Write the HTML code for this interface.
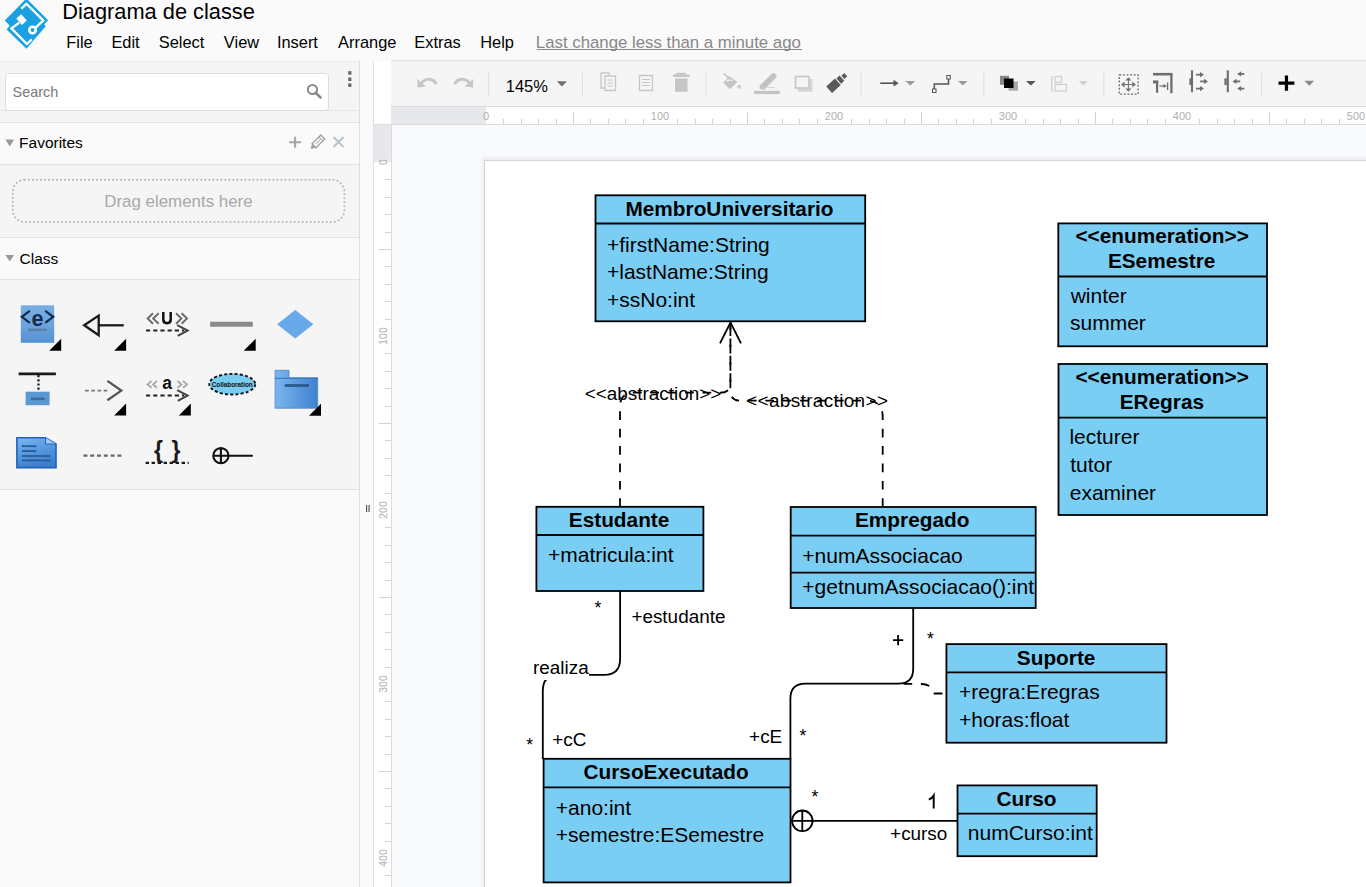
<!DOCTYPE html>
<html><head><meta charset="utf-8"><title>Diagrama de classe</title>
<style>
html,body{margin:0;padding:0;width:1366px;height:887px;overflow:hidden;background:#fafafa;}
svg{display:block;font-family:"Liberation Sans",sans-serif;}
</style></head><body>
<svg width="1366" height="887" viewBox="0 0 1366 887">
<rect x="0" y="0" width="1366" height="887" fill="#fafafa"/>
<rect x="0" y="61" width="360" height="826" fill="#f5f5f5"/>
<line x1="0" y1="61.5" x2="360" y2="61.5" stroke="#ececec" stroke-width="1"/>
<rect x="0" y="123" width="360" height="41" fill="#fafafa"/>
<rect x="0" y="238" width="360" height="41" fill="#fafafa"/>
<rect x="0" y="490" width="360" height="397" fill="#fafafa"/>
<line x1="0" y1="110.5" x2="360" y2="110.5" stroke="#e6e6e6" stroke-width="1"/>
<line x1="0" y1="122.5" x2="360" y2="122.5" stroke="#e2e2e2" stroke-width="1"/>
<line x1="0" y1="164.5" x2="360" y2="164.5" stroke="#e2e2e2" stroke-width="1"/>
<line x1="0" y1="237.5" x2="360" y2="237.5" stroke="#e2e2e2" stroke-width="1"/>
<line x1="0" y1="279.5" x2="360" y2="279.5" stroke="#e2e2e2" stroke-width="1"/>
<line x1="0" y1="489.5" x2="360" y2="489.5" stroke="#e2e2e2" stroke-width="1"/>
<line x1="359.5" y1="61" x2="359.5" y2="887" stroke="#e0e0e0" stroke-width="1"/>
<rect x="360" y="61" width="14" height="826" fill="#fafafa"/>
<line x1="373.5" y1="61" x2="373.5" y2="887" stroke="#e2e2e2" stroke-width="1"/>
<rect x="391" y="61" width="975" height="45" fill="#f5f5f5"/>
<line x1="391" y1="60.5" x2="1366" y2="60.5" stroke="#e0e0e0" stroke-width="1"/>
<rect x="374" y="61" width="17" height="45" fill="#ffffff"/>
<rect x="392" y="124" width="974" height="763" fill="#f8f9fa"/>
<rect x="374" y="106" width="992" height="18" fill="#ffffff"/>
<rect x="374" y="106" width="17.5" height="781" fill="#ffffff"/>
<rect x="391" y="106.5" width="95" height="17.5" fill="#e7e8eb"/>
<rect x="374" y="124" width="17.5" height="38" fill="#e7e8eb"/>
<line x1="391" y1="106.5" x2="1366" y2="106.5" stroke="#dcdcdc" stroke-width="1"/>
<line x1="374" y1="124.5" x2="1366" y2="124.5" stroke="#dcdcdc" stroke-width="1"/>
<line x1="391.5" y1="124" x2="391.5" y2="887" stroke="#dcdcdc" stroke-width="1"/>
<rect x="481.5" y="156.5" width="900" height="800" fill="#f3f4f6"/>
<rect x="483" y="158" width="900" height="800" fill="#eceef0"/>
<rect x="484.5" y="160.5" width="900" height="800" fill="#ffffff" stroke="#d6d6d6" stroke-width="1"/>
<g>
<polygon points="26.4,-1.5 48.2,20.3 44.2,24.3 45.8,26.2 26.4,48.8 6.6,29.4 9.6,25.6 4.8,20.6" fill="#1ba1e2"/>
<polyline points="21.3,8.6 26.4,3.8 43.2,20.5 34.6,28.6" fill="none" stroke="#fff" stroke-width="2.3"/>
<polygon points="16.3,18.6 21.2,14.2 26.8,20.4 21.9,25" fill="#fff"/>
<polyline points="19.2,22.8 11.4,28.4 26.8,44 31.8,39.4" fill="none" stroke="#fff" stroke-width="2.3"/>
<circle cx="32.5" cy="30" r="3.2" fill="none" stroke="#fff" stroke-width="2.6"/>
</g>
<text x="62.26" y="19.00" font-size="21.8" fill="#000">Diagrama de classe</text>
<text x="66.29" y="47.60" font-size="16.4" fill="#000">File</text>
<text x="111.39" y="47.60" font-size="16.4" fill="#000">Edit</text>
<text x="158.76" y="47.60" font-size="16.4" fill="#000">Select</text>
<text x="223.86" y="47.60" font-size="16.4" fill="#000">View</text>
<text x="276.92" y="47.60" font-size="16.4" fill="#000">Insert</text>
<text x="338.10" y="47.60" font-size="16.4" fill="#000">Arrange</text>
<text x="414.29" y="47.60" font-size="16.4" fill="#000">Extras</text>
<text x="480.19" y="47.60" font-size="16.4" fill="#000">Help</text>
<text x="535.86" y="47.60" font-size="16.8" fill="#888">Last change less than a minute ago</text>
<line x1="536.7" y1="49.5" x2="801.9" y2="49.5" stroke="#888" stroke-width="1"/>
<rect x="5.5" y="73.5" width="323" height="37" fill="#ffffff" rx="3" stroke="#dcdcdc" stroke-width="1"/>
<text x="12.55" y="96.80" font-size="14.4" fill="#777">Search</text>
<circle cx="312.5" cy="89.5" r="4.6" fill="none" stroke="#8a8a8a" stroke-width="2"/><line x1="315.6" y1="92.7" x2="320.5" y2="97.5" stroke="#8a8a8a" stroke-width="2.6" stroke-linecap="round"/>
<rect x="348.2" y="71.2" width="3.2" height="3.5" fill="#666"/>
<rect x="348.2" y="77.5" width="3.2" height="3.5" fill="#666"/>
<rect x="348.2" y="83.4" width="3.2" height="3.5" fill="#666"/>
<polygon points="5.4,139.6 14.1,139.6 9.75,146.4" fill="#999"/>
<text x="19.06" y="148.40" font-size="15.5" fill="#000">Favorites</text>
<path d="M289.3,142.3 H301 M295.1,136.7 V147.8" stroke="#a6a6a6" stroke-width="2.1"/>
<g transform="translate(317.2,142.6) rotate(-45)"><rect x="-4.5" y="-2.8" width="12.5" height="5.6" fill="#fafafa" stroke="#a4a4a4" stroke-width="1.3"/><path d="M-4.5,-2.8 L-9.2,0 L-4.5,2.8 Z" fill="#a0a0a0"/><path d="M5.2,-2.8 V2.8" stroke="#a4a4a4" stroke-width="1"/><path d="M-2,0 H4" stroke="#b0b0b0" stroke-width="1"/></g>
<path d="M333.5,137 L343.5,147 M343.5,137 L333.5,147" stroke="#b9c2d2" stroke-width="2.1"/>
<rect x="12.8" y="179.8" width="331.6" height="42.2" rx="12" fill="none" stroke="#b4b4b4" stroke-width="2" stroke-linecap="round" stroke-dasharray="0.01,4"/>
<text x="104.25" y="206.80" font-size="16.9" fill="#a8a8a8">Drag elements here</text>
<polygon points="5.4,255 14.1,255 9.75,261.6" fill="#999"/>
<text x="19.53" y="263.60" font-size="15.5" fill="#000">Class</text>
<defs>
<linearGradient id="gblue" x1="0" y1="0" x2="1" y2="1"><stop offset="0" stop-color="#7fb6e6"/><stop offset="1" stop-color="#3f86cf"/></linearGradient>
<linearGradient id="gblue2" x1="0" y1="0" x2="1" y2="0"><stop offset="0" stop-color="#6aa8e4"/><stop offset="1" stop-color="#2f74c4"/></linearGradient>
</defs>
<defs><linearGradient id="genum" x1="0" y1="0" x2="0" y2="1"><stop offset="0" stop-color="#78aee4"/><stop offset="0.55" stop-color="#6aa3dc"/><stop offset="1" stop-color="#5590d2"/></linearGradient></defs>
<rect x="20.8" y="305.3" width="33.4" height="37.5" fill="url(#genum)"/>
<text x="37.5" y="326" font-size="21.5" font-weight="bold" text-anchor="middle" fill="#132c4c">e</text>
<path d="M29.8,310.8 L21.8,316.8 L29.8,322.8 M45.2,310.8 L53.2,316.8 L45.2,322.8" fill="none" stroke="#132c4c" stroke-width="2.2"/>
<line x1="28" y1="329.9" x2="47" y2="329.9" stroke="#5a82ad" stroke-width="2.6"/>
<polygon points="61.2,338.8 61.2,350.8 49.2,350.8" fill="#000"/>
<path d="M84.2,325.3 L98.7,315.6 L98.7,335.2 Z" fill="#f5f5f5" stroke="#1a1a1a" stroke-width="2.3"/>
<line x1="98.7" y1="325.3" x2="123.8" y2="325.3" stroke="#1a1a1a" stroke-width="2.3"/>
<polygon points="126.1,338.8 126.1,350.8 114.1,350.8" fill="#000"/>
<path d="M153,313.2 L147.6,318.5 L153,323.8 M158.6,313.2 L153.2,318.5 L158.6,323.8 M176,313.2 L181.4,318.5 L176,323.8 M181.6,313.2 L187,318.5 L181.6,323.8" fill="none" stroke="#6a6a6a" stroke-width="1.9"/>
<path d="M163.3,312 V319.6 Q163.3,323.2 167,323.2 Q170.7,323.2 170.7,319.6 V312" fill="none" stroke="#111" stroke-width="2.5"/>
<path d="M146,330.5 H184" stroke="#222" stroke-width="2.2" stroke-dasharray="4.2,3"/><path d="M177.2,325.2 L187.6,330.5 L177.8,335.8" fill="none" stroke="#444" stroke-width="2"/>
<line x1="210.1" y1="324.2" x2="252.8" y2="324.2" stroke="#8a8a8a" stroke-width="5"/>
<polygon points="255.7,338.7 255.7,350.7 243.7,350.7" fill="#000"/>
<polygon points="295.2,310.1 313.4,324.35 295.2,338.6 277.1,324.35" fill="#68a9ea"/>
<line x1="18.6" y1="373.9" x2="55.9" y2="373.9" stroke="#1a1a1a" stroke-width="2.6"/>
<path d="M38.5,375 V391.5" stroke="#1a1a1a" stroke-width="2.2" stroke-dasharray="2.2,2"/>
<rect x="25.6" y="391.7" width="24" height="13.5" fill="#5b97d3"/>
<line x1="30.9" y1="398.9" x2="44.8" y2="398.9" stroke="#3a6a9e" stroke-width="2.6"/>
<path d="M85.1,390.6 H110" stroke="#777" stroke-width="1.9" stroke-dasharray="3.6,2.6"/><path d="M107.4,380.9 L121.3,390.6 L107.4,400.3" fill="none" stroke="#555" stroke-width="2.3"/>
<polygon points="126.1,403.6 126.1,415.6 114.1,415.6" fill="#000"/>
<path d="M151.5,381 L147.5,384.4 L151.5,387.8 M157,381 L153,384.4 L157,387.8 M177.5,381 L181.5,384.4 L177.5,387.8 M183,381 L187,384.4 L183,387.8" fill="none" stroke="#a8a8a8" stroke-width="1.8"/>
<text x="167" y="388.8" font-size="17.5" font-weight="bold" text-anchor="middle" fill="#111">a</text>
<path d="M146,395.5 H184" stroke="#222" stroke-width="2.2" stroke-dasharray="4.2,3"/><path d="M177.2,390.2 L187.6,395.5 L177.8,400.8" fill="none" stroke="#444" stroke-width="2"/>
<polygon points="190.8,403.6 190.8,415.6 178.8,415.6" fill="#000"/>
<ellipse cx="232.25" cy="384.2" rx="23" ry="10.3" fill="#7accf0" stroke="#111" stroke-width="1.9" stroke-dasharray="3,2.2"/>
<text x="232.25" y="386.6" font-size="6.6" font-weight="bold" text-anchor="middle" fill="#111" textLength="41" lengthAdjust="spacingAndGlyphs">Collaboration</text>
<defs><linearGradient id="gfold" x1="0" y1="0" x2="1" y2="0"><stop offset="0" stop-color="#7ab6ee"/><stop offset="1" stop-color="#3f80d0"/></linearGradient></defs>
<path d="M275.1,370.3 H289 V377.8 H317.7 V408.2 H275.1 Z" fill="url(#gfold)" stroke="#4a86c8" stroke-width="0.8"/>
<line x1="275.1" y1="378.3" x2="317.7" y2="378.3" stroke="#3f78bd" stroke-width="1.2"/>
<line x1="284.6" y1="385.5" x2="308.9" y2="385.5" stroke="#2b5a8c" stroke-width="2.8"/>
<polygon points="321,403.7 321,415.7 309,415.7" fill="#000"/>
<defs><linearGradient id="gnote" x1="0" y1="0" x2="0.4" y2="1"><stop offset="0" stop-color="#7ab8f0"/><stop offset="1" stop-color="#3a7fd0"/></linearGradient></defs>
<path d="M16.9,437.8 H45.5 L56,444 V467.6 H16.9 Z" fill="url(#gnote)" stroke="#1f62b8" stroke-width="1.6"/>
<path d="M45.5,437.8 V444 H56" fill="#9fcaf5" stroke="#1f62b8" stroke-width="1"/>
<line x1="21.8" y1="446.2" x2="36.4" y2="446.2" stroke="#2a5a9a" stroke-width="1.8"/>
<line x1="21.8" y1="451.1" x2="36.4" y2="451.1" stroke="#2a5a9a" stroke-width="1.8"/>
<line x1="21.8" y1="456" x2="50.3" y2="456" stroke="#2a5a9a" stroke-width="1.8"/>
<line x1="21.8" y1="460.4" x2="50.3" y2="460.4" stroke="#2a5a9a" stroke-width="1.8"/>
<path d="M83.4,455.7 H124" stroke="#666" stroke-width="2.2" stroke-dasharray="4,2.8"/>
<text x="158.5" y="457.5" font-size="23" font-weight="bold" text-anchor="middle" fill="#1a1a1a">{</text>
<text x="175.9" y="457.5" font-size="23" font-weight="bold" text-anchor="middle" fill="#1a1a1a">}</text>
<path d="M145.6,462.9 H188.7" stroke="#1a1a1a" stroke-width="2.2" stroke-dasharray="3.4,2.6"/>
<circle cx="220.9" cy="455.7" r="7.6" fill="none" stroke="#111" stroke-width="2.1"/><path d="M213.3,455.7 H252.8 M220.9,448.1 V463.3" stroke="#111" stroke-width="2.1"/>
<path d="M420,86 C423,78 432,77 436.5,84" fill="none" stroke="#c6c6c6" stroke-width="3"/><polygon points="417.5,79 426,86.5 417.5,87.5" fill="#c6c6c6"/>
<path d="M454.5,84 C459,77 468,78 471,86" fill="none" stroke="#c6c6c6" stroke-width="3"/><polygon points="473,79 464.5,86.5 473,87.5" fill="#c6c6c6"/>
<line x1="488.7" y1="72.5" x2="488.7" y2="96" stroke="#dedede" stroke-width="1"/>
<text x="505.76" y="91.60" font-size="16.5" fill="#000">145%</text>
<polygon points="556.8,81.2 567,81.2 561.9,86.4" fill="#707070"/>
<line x1="582.4" y1="72.5" x2="582.4" y2="96" stroke="#dedede" stroke-width="1"/>
<path d="M601,73 H609 V88 H601 Z" fill="none" stroke="#c6c6c6" stroke-width="1.3"/><path d="M605,76 H615.5 V90.5 H605 Z" fill="#f5f5f5" stroke="#c6c6c6" stroke-width="1.3"/><path d="M607.5,80 H613 M607.5,83 H613 M607.5,86 H613" stroke="#c6c6c6" stroke-width="1.2"/>
<path d="M639.5,75.5 H652.5 V90.5 H639.5 Z" fill="none" stroke="#c6c6c6" stroke-width="1.3"/><path d="M642,79.5 H650 M642,82.5 H650 M642,85.5 H650" stroke="#c6c6c6" stroke-width="1.2"/>
<rect x="673" y="74.5" width="16.5" height="2.5" fill="#c6c6c6"/><rect x="676" y="72.8" width="10" height="2" fill="#c6c6c6"/><rect x="675" y="78.5" width="12.5" height="13.3" fill="#c6c6c6"/>
<line x1="706" y1="72.5" x2="706" y2="96" stroke="#dedede" stroke-width="1"/>
<path d="M723.2,82.6 L729.2,76 L737.5,82 L729.8,89.2 Z" fill="#c4c4c4"/><path d="M725.5,81.6 L729.2,77.8 L733.5,80.8 Z" fill="#f5f5f5"/><path d="M723.7,73.2 L730.9,80.4" stroke="#c4c4c4" stroke-width="1.6"/><circle cx="739.2" cy="86.8" r="2.1" fill="#cfcfcf"/>
<path d="M759.6,89 L759.8,85.6 L771.6,73.8 Q773.3,72.2 775,73.8 L775.8,74.6 Q777.4,76.3 775.8,78 L764,89.8 Z" fill="#c2c2c2"/><path d="M767,87.6 H775" stroke="#d2d2d2" stroke-width="1"/>
<rect x="754" y="90.8" width="25.7" height="3.3" fill="#c4c4c4"/>
<rect x="798" y="79" width="14.5" height="12.8" fill="#d6d6d6"/><rect x="795.5" y="76.5" width="13.5" height="11.5" fill="#f5f5f5" stroke="#c6c6c6" stroke-width="1.6"/>
<g transform="translate(836,83.5) rotate(-42) scale(0.84)"><rect x="-11" y="-5.2" width="14" height="10.4" fill="#5a5a5a"/><rect x="4.4" y="-4.2" width="5" height="8.4" fill="#5a5a5a"/><rect x="11" y="-2.6" width="4.6" height="5.2" fill="#5a5a5a"/></g>
<line x1="861" y1="72.5" x2="861" y2="96" stroke="#dedede" stroke-width="1"/>
<path d="M880.2,83.2 H896" stroke="#555" stroke-width="1.6"/><polygon points="893.5,79.8 898.7,83.2 893.5,86.6" fill="#555"/>
<polygon points="905.3,81 915.3,81 910.3,85.5" fill="#9a9a9a"/>
<path d="M934.3,90.5 V84 H948.5 V77.5" fill="none" stroke="#555" stroke-width="1.5"/><rect x="932.5" y="89" width="3.5" height="3.5" fill="#f5f5f5" stroke="#555" stroke-width="1"/><rect x="946.8" y="75.5" width="3.5" height="3.5" fill="#f5f5f5" stroke="#555" stroke-width="1"/>
<polygon points="958,81 967.5,81 962.75,85.5" fill="#9a9a9a"/>
<line x1="983.9" y1="72.5" x2="983.9" y2="96" stroke="#dedede" stroke-width="1"/>
<rect x="1000" y="75.8" width="9" height="9" fill="#888"/><rect x="1008.5" y="81.5" width="9.5" height="9.2" fill="#aaa"/><rect x="1004" y="78.5" width="9.5" height="9.5" fill="#000"/>
<polygon points="1026,81 1035.7,81 1030.85,85.5" fill="#555"/>
<path d="M1051.8,76 V92" stroke="#cfcfcf" stroke-width="1.4"/><rect x="1055" y="76.5" width="6.5" height="6" fill="none" stroke="#cfcfcf" stroke-width="1.3"/><rect x="1055" y="84.5" width="11.5" height="6.5" fill="none" stroke="#cfcfcf" stroke-width="1.3"/>
<polygon points="1078.7,81 1087.9,81 1083.3,85.5" fill="#d0d0d0"/>
<line x1="1103.9" y1="72.5" x2="1103.9" y2="96" stroke="#dedede" stroke-width="1"/>
<rect x="1119.3" y="74.8" width="18.8" height="19.3" fill="none" stroke="#6e6e6e" stroke-width="1.3" stroke-dasharray="2,1.6"/>
<path d="M1128.4,80 V89 M1124,84.5 H1133" stroke="#6e6e6e" stroke-width="1"/>
<polygon points="1128.4,77.2 1125.4,80.6 1131.4,80.6" fill="#6e6e6e"/><polygon points="1128.4,91.8 1125.4,88.4 1131.4,88.4" fill="#6e6e6e"/><polygon points="1121.2,84.5 1124.6,81.5 1124.6,87.5" fill="#6e6e6e"/><polygon points="1135.8,84.5 1132.4,81.5 1132.4,87.5" fill="#6e6e6e"/>
<path d="M1153,74.2 H1172.5" stroke="#6e6e6e" stroke-width="2.6"/><path d="M1171.4,74.2 V93.2" stroke="#6e6e6e" stroke-width="2.3"/>
<path d="M1153,81.9 H1158.2" stroke="#6e6e6e" stroke-width="3"/><path d="M1157.1,81 V92.7" stroke="#6e6e6e" stroke-width="2.2"/>
<path d="M1159.5,86 H1164.5" stroke="#6e6e6e" stroke-width="1.2"/><polygon points="1167,86 1163.5,84 1163.5,88" fill="#6e6e6e"/><path d="M1167.6,82.4 V90.1" stroke="#6e6e6e" stroke-width="1.3"/>
<path d="M1192,70.3 V92.2" stroke="#6e6e6e" stroke-width="2.1"/><rect x="1189.4" y="78.3" width="2" height="6.7" fill="#6e6e6e"/>
<path d="M1196,74.7 H1201" stroke="#6e6e6e" stroke-width="1.8"/><polygon points="1204,74.7 1200,72.10000000000001 1200,77.3" fill="#6e6e6e"/>
<path d="M1200.2,81.4 H1205" stroke="#6e6e6e" stroke-width="1.8"/><polygon points="1208,81.4 1204,78.80000000000001 1204,84.0" fill="#6e6e6e"/>
<path d="M1196,88.6 H1201" stroke="#6e6e6e" stroke-width="1.8"/><polygon points="1204,88.6 1200,86.0 1200,91.19999999999999" fill="#6e6e6e"/>
<path d="M1227.8,70.3 V92.2" stroke="#6e6e6e" stroke-width="2.1"/><rect x="1224.4" y="78.3" width="2.4" height="6.7" fill="#6e6e6e"/>
<path d="M1240.2,73.9 H1244.3" stroke="#6e6e6e" stroke-width="1.8"/><polygon points="1237.2,73.9 1241.2,71.30000000000001 1241.2,76.5" fill="#6e6e6e"/>
<path d="M1235.5,81.4 H1240.2" stroke="#6e6e6e" stroke-width="1.8"/><polygon points="1232.5,81.4 1236.5,78.80000000000001 1236.5,84.0" fill="#6e6e6e"/>
<path d="M1240.2,88.6 H1244.3" stroke="#6e6e6e" stroke-width="1.8"/><polygon points="1237.2,88.6 1241.2,86.0 1241.2,91.19999999999999" fill="#6e6e6e"/>
<line x1="1261.6" y1="72.5" x2="1261.6" y2="96" stroke="#dedede" stroke-width="1"/>
<path d="M1278.5,83.1 H1294.4 M1286.45,75.5 V90.7" stroke="#000" stroke-width="3.2"/>
<polygon points="1304.3,80.8 1314.2,80.8 1309.25,85.8" fill="#8a8a8a"/>
<line x1="503.5" y1="119" x2="503.5" y2="124" stroke="#d2d2d2" stroke-width="1"/>
<line x1="521.5" y1="119" x2="521.5" y2="124" stroke="#d2d2d2" stroke-width="1"/>
<line x1="538.5" y1="119" x2="538.5" y2="124" stroke="#d2d2d2" stroke-width="1"/>
<line x1="556.5" y1="119" x2="556.5" y2="124" stroke="#d2d2d2" stroke-width="1"/>
<line x1="573.5" y1="111.5" x2="573.5" y2="124" stroke="#d2d2d2" stroke-width="1"/>
<line x1="590.5" y1="119" x2="590.5" y2="124" stroke="#d2d2d2" stroke-width="1"/>
<line x1="608.5" y1="119" x2="608.5" y2="124" stroke="#d2d2d2" stroke-width="1"/>
<line x1="625.5" y1="119" x2="625.5" y2="124" stroke="#d2d2d2" stroke-width="1"/>
<line x1="643.5" y1="119" x2="643.5" y2="124" stroke="#d2d2d2" stroke-width="1"/>
<line x1="677.5" y1="119" x2="677.5" y2="124" stroke="#d2d2d2" stroke-width="1"/>
<line x1="695.5" y1="119" x2="695.5" y2="124" stroke="#d2d2d2" stroke-width="1"/>
<line x1="712.5" y1="119" x2="712.5" y2="124" stroke="#d2d2d2" stroke-width="1"/>
<line x1="730.5" y1="119" x2="730.5" y2="124" stroke="#d2d2d2" stroke-width="1"/>
<line x1="747.5" y1="111.5" x2="747.5" y2="124" stroke="#d2d2d2" stroke-width="1"/>
<line x1="764.5" y1="119" x2="764.5" y2="124" stroke="#d2d2d2" stroke-width="1"/>
<line x1="782.5" y1="119" x2="782.5" y2="124" stroke="#d2d2d2" stroke-width="1"/>
<line x1="799.5" y1="119" x2="799.5" y2="124" stroke="#d2d2d2" stroke-width="1"/>
<line x1="817.5" y1="119" x2="817.5" y2="124" stroke="#d2d2d2" stroke-width="1"/>
<line x1="851.5" y1="119" x2="851.5" y2="124" stroke="#d2d2d2" stroke-width="1"/>
<line x1="869.5" y1="119" x2="869.5" y2="124" stroke="#d2d2d2" stroke-width="1"/>
<line x1="886.5" y1="119" x2="886.5" y2="124" stroke="#d2d2d2" stroke-width="1"/>
<line x1="904.5" y1="119" x2="904.5" y2="124" stroke="#d2d2d2" stroke-width="1"/>
<line x1="921.5" y1="111.5" x2="921.5" y2="124" stroke="#d2d2d2" stroke-width="1"/>
<line x1="938.5" y1="119" x2="938.5" y2="124" stroke="#d2d2d2" stroke-width="1"/>
<line x1="956.5" y1="119" x2="956.5" y2="124" stroke="#d2d2d2" stroke-width="1"/>
<line x1="973.5" y1="119" x2="973.5" y2="124" stroke="#d2d2d2" stroke-width="1"/>
<line x1="991.5" y1="119" x2="991.5" y2="124" stroke="#d2d2d2" stroke-width="1"/>
<line x1="1025.5" y1="119" x2="1025.5" y2="124" stroke="#d2d2d2" stroke-width="1"/>
<line x1="1043.5" y1="119" x2="1043.5" y2="124" stroke="#d2d2d2" stroke-width="1"/>
<line x1="1060.5" y1="119" x2="1060.5" y2="124" stroke="#d2d2d2" stroke-width="1"/>
<line x1="1078.5" y1="119" x2="1078.5" y2="124" stroke="#d2d2d2" stroke-width="1"/>
<line x1="1095.5" y1="111.5" x2="1095.5" y2="124" stroke="#d2d2d2" stroke-width="1"/>
<line x1="1112.5" y1="119" x2="1112.5" y2="124" stroke="#d2d2d2" stroke-width="1"/>
<line x1="1130.5" y1="119" x2="1130.5" y2="124" stroke="#d2d2d2" stroke-width="1"/>
<line x1="1147.5" y1="119" x2="1147.5" y2="124" stroke="#d2d2d2" stroke-width="1"/>
<line x1="1165.5" y1="119" x2="1165.5" y2="124" stroke="#d2d2d2" stroke-width="1"/>
<line x1="1199.5" y1="119" x2="1199.5" y2="124" stroke="#d2d2d2" stroke-width="1"/>
<line x1="1217.5" y1="119" x2="1217.5" y2="124" stroke="#d2d2d2" stroke-width="1"/>
<line x1="1234.5" y1="119" x2="1234.5" y2="124" stroke="#d2d2d2" stroke-width="1"/>
<line x1="1252.5" y1="119" x2="1252.5" y2="124" stroke="#d2d2d2" stroke-width="1"/>
<line x1="1269.5" y1="111.5" x2="1269.5" y2="124" stroke="#d2d2d2" stroke-width="1"/>
<line x1="1286.5" y1="119" x2="1286.5" y2="124" stroke="#d2d2d2" stroke-width="1"/>
<line x1="1304.5" y1="119" x2="1304.5" y2="124" stroke="#d2d2d2" stroke-width="1"/>
<line x1="1321.5" y1="119" x2="1321.5" y2="124" stroke="#d2d2d2" stroke-width="1"/>
<line x1="1339.5" y1="119" x2="1339.5" y2="124" stroke="#d2d2d2" stroke-width="1"/>
<text x="486.0" y="119.6" font-size="11" text-anchor="middle" fill="#b0b0b0">0</text>
<text x="660.0" y="119.6" font-size="11" text-anchor="middle" fill="#b0b0b0">100</text>
<text x="834.0" y="119.6" font-size="11" text-anchor="middle" fill="#b0b0b0">200</text>
<text x="1008.0" y="119.6" font-size="11" text-anchor="middle" fill="#b0b0b0">300</text>
<text x="1182.0" y="119.6" font-size="11" text-anchor="middle" fill="#b0b0b0">400</text>
<text x="1356.0" y="119.6" font-size="11" text-anchor="middle" fill="#b0b0b0">500</text>
<line x1="385" y1="179.5" x2="391" y2="179.5" stroke="#d4d4d4" stroke-width="1"/>
<line x1="385" y1="197.5" x2="391" y2="197.5" stroke="#d4d4d4" stroke-width="1"/>
<line x1="385" y1="214.5" x2="391" y2="214.5" stroke="#d4d4d4" stroke-width="1"/>
<line x1="385" y1="232.5" x2="391" y2="232.5" stroke="#d4d4d4" stroke-width="1"/>
<line x1="379" y1="249.5" x2="391" y2="249.5" stroke="#d2d2d2" stroke-width="1"/>
<line x1="385" y1="266.5" x2="391" y2="266.5" stroke="#d4d4d4" stroke-width="1"/>
<line x1="385" y1="284.5" x2="391" y2="284.5" stroke="#d4d4d4" stroke-width="1"/>
<line x1="385" y1="301.5" x2="391" y2="301.5" stroke="#d4d4d4" stroke-width="1"/>
<line x1="385" y1="319.5" x2="391" y2="319.5" stroke="#d4d4d4" stroke-width="1"/>
<line x1="385" y1="353.5" x2="391" y2="353.5" stroke="#d4d4d4" stroke-width="1"/>
<line x1="385" y1="371.5" x2="391" y2="371.5" stroke="#d4d4d4" stroke-width="1"/>
<line x1="385" y1="388.5" x2="391" y2="388.5" stroke="#d4d4d4" stroke-width="1"/>
<line x1="385" y1="406.5" x2="391" y2="406.5" stroke="#d4d4d4" stroke-width="1"/>
<line x1="379" y1="423.5" x2="391" y2="423.5" stroke="#d2d2d2" stroke-width="1"/>
<line x1="385" y1="440.5" x2="391" y2="440.5" stroke="#d4d4d4" stroke-width="1"/>
<line x1="385" y1="458.5" x2="391" y2="458.5" stroke="#d4d4d4" stroke-width="1"/>
<line x1="385" y1="475.5" x2="391" y2="475.5" stroke="#d4d4d4" stroke-width="1"/>
<line x1="385" y1="493.5" x2="391" y2="493.5" stroke="#d4d4d4" stroke-width="1"/>
<line x1="385" y1="527.5" x2="391" y2="527.5" stroke="#d4d4d4" stroke-width="1"/>
<line x1="385" y1="545.5" x2="391" y2="545.5" stroke="#d4d4d4" stroke-width="1"/>
<line x1="385" y1="562.5" x2="391" y2="562.5" stroke="#d4d4d4" stroke-width="1"/>
<line x1="385" y1="580.5" x2="391" y2="580.5" stroke="#d4d4d4" stroke-width="1"/>
<line x1="379" y1="597.5" x2="391" y2="597.5" stroke="#d2d2d2" stroke-width="1"/>
<line x1="385" y1="614.5" x2="391" y2="614.5" stroke="#d4d4d4" stroke-width="1"/>
<line x1="385" y1="632.5" x2="391" y2="632.5" stroke="#d4d4d4" stroke-width="1"/>
<line x1="385" y1="649.5" x2="391" y2="649.5" stroke="#d4d4d4" stroke-width="1"/>
<line x1="385" y1="667.5" x2="391" y2="667.5" stroke="#d4d4d4" stroke-width="1"/>
<line x1="385" y1="701.5" x2="391" y2="701.5" stroke="#d4d4d4" stroke-width="1"/>
<line x1="385" y1="719.5" x2="391" y2="719.5" stroke="#d4d4d4" stroke-width="1"/>
<line x1="385" y1="736.5" x2="391" y2="736.5" stroke="#d4d4d4" stroke-width="1"/>
<line x1="385" y1="754.5" x2="391" y2="754.5" stroke="#d4d4d4" stroke-width="1"/>
<line x1="379" y1="771.5" x2="391" y2="771.5" stroke="#d2d2d2" stroke-width="1"/>
<line x1="385" y1="788.5" x2="391" y2="788.5" stroke="#d4d4d4" stroke-width="1"/>
<line x1="385" y1="806.5" x2="391" y2="806.5" stroke="#d4d4d4" stroke-width="1"/>
<line x1="385" y1="823.5" x2="391" y2="823.5" stroke="#d4d4d4" stroke-width="1"/>
<line x1="385" y1="841.5" x2="391" y2="841.5" stroke="#d4d4d4" stroke-width="1"/>
<line x1="385" y1="875.5" x2="391" y2="875.5" stroke="#d4d4d4" stroke-width="1"/>
<text x="0" y="0" font-size="10.4" text-anchor="middle" fill="#b0b0b0" transform="translate(387.3,162.0) rotate(-90)">0</text>
<text x="0" y="0" font-size="10.4" text-anchor="middle" fill="#b0b0b0" transform="translate(387.3,336.0) rotate(-90)">100</text>
<text x="0" y="0" font-size="10.4" text-anchor="middle" fill="#b0b0b0" transform="translate(387.3,510.0) rotate(-90)">200</text>
<text x="0" y="0" font-size="10.4" text-anchor="middle" fill="#b0b0b0" transform="translate(387.3,684.0) rotate(-90)">300</text>
<text x="0" y="0" font-size="10.4" text-anchor="middle" fill="#b0b0b0" transform="translate(387.3,858.0) rotate(-90)">400</text>
<rect x="366" y="505" width="1.2" height="7" fill="#555"/>
<rect x="368.5" y="505" width="1.2" height="7" fill="#555"/>
<path d="M620,507 V406.7 Q620,392.7 634,392.7 H720.4 Q730.4,392.7 730.4,382.7 V322.5" fill="none" stroke="#000" stroke-width="1.8" stroke-dasharray="8.7 8.7"/>
<path d="M882.7,507 V416.7 Q882.7,400.7 866.7,400.7 H740.4 Q730.4,400.7 730.4,390.7 V322.5" fill="none" stroke="#000" stroke-width="1.8" stroke-dasharray="8.7 8.7"/>
<path d="M720,343.3 L730.5,322.5 L741,343.3" fill="none" stroke="#000" stroke-width="1.8"/>
<path d="M620.1,591 V659 Q620.1,674.8 604.3,674.8 H558.6 Q542.8,674.8 542.8,690.6 V759" fill="none" stroke="#000" stroke-width="1.8"/>
<path d="M913.2,608 V668.8 Q913.2,683.7 898.3,683.7 H805.3 Q790.4,683.7 790.4,698.6 V759" fill="none" stroke="#000" stroke-width="1.8"/>
<path d="M947,693.5 L934.2,693.5 C932,693.5 931,687.5 929.8,686.4 C927,684.5 924,684 921.6,684 L896,683.7" fill="none" stroke="#000" stroke-width="1.8" stroke-dasharray="8.7 8.7" stroke-dashoffset="12.8"/>
<line x1="812.8" y1="820.8" x2="957.5" y2="820.8" stroke="#000" stroke-width="1.8"/>
<circle cx="802.3" cy="820.8" r="10.3" fill="#fff" stroke="#000" stroke-width="1.8"/><path d="M792,820.8 H812.6 M802.3,810.5 V831.1" stroke="#000" stroke-width="1.8"/>
<rect x="595.5" y="195.3" width="269.70" height="126.00" fill="#7acef4" stroke="#000" stroke-width="1.8"/>
<line x1="595.5" y1="223.5" x2="865.2" y2="223.5" stroke="#000" stroke-width="1.8"/>
<rect x="1058.3" y="223.4" width="208.70" height="122.90" fill="#7acef4" stroke="#000" stroke-width="1.8"/>
<line x1="1058.3" y1="276.5" x2="1267" y2="276.5" stroke="#000" stroke-width="1.8"/>
<rect x="1058.5" y="364" width="208.50" height="151.00" fill="#7acef4" stroke="#000" stroke-width="1.8"/>
<line x1="1058.5" y1="417.7" x2="1267" y2="417.7" stroke="#000" stroke-width="1.8"/>
<rect x="536.4" y="506.8" width="167.00" height="84.20" fill="#7acef4" stroke="#000" stroke-width="1.8"/>
<line x1="536.4" y1="535" x2="703.4" y2="535" stroke="#000" stroke-width="1.8"/>
<rect x="790.7" y="507" width="245.00" height="101.00" fill="#7acef4" stroke="#000" stroke-width="1.8"/>
<line x1="790.7" y1="535.7" x2="1035.7" y2="535.7" stroke="#000" stroke-width="1.8"/>
<line x1="790.7" y1="572.6" x2="1035.7" y2="572.6" stroke="#000" stroke-width="1.8"/>
<rect x="946.4" y="644.1" width="220.10" height="98.60" fill="#7acef4" stroke="#000" stroke-width="1.8"/>
<line x1="946.4" y1="672.4" x2="1166.5" y2="672.4" stroke="#000" stroke-width="1.8"/>
<rect x="543.6" y="758.8" width="246.90" height="123.60" fill="#7acef4" stroke="#000" stroke-width="1.8"/>
<line x1="543.6" y1="787.3" x2="790.5" y2="787.3" stroke="#000" stroke-width="1.8"/>
<rect x="957.5" y="785.4" width="139.20" height="70.80" fill="#7acef4" stroke="#000" stroke-width="1.8"/>
<line x1="957.5" y1="813.7" x2="1096.7" y2="813.7" stroke="#000" stroke-width="1.8"/>
<text x="625.49" y="215.60" font-size="20.8" font-weight="bold" fill="#000">MembroUniversitario</text>
<text x="607.00" y="251.50" font-size="21.0" fill="#000">+firstName:String</text>
<text x="607.00" y="279.10" font-size="21.0" fill="#000">+lastName:String</text>
<text x="607.00" y="306.80" font-size="21.0" fill="#000">+ssNo:int</text>
<text x="1075.44" y="243.20" font-size="20.8" font-weight="bold" fill="#000">&lt;&lt;enumeration&gt;&gt;</text>
<text x="1107.89" y="267.60" font-size="20.8" font-weight="bold" fill="#000">ESemestre</text>
<text x="1070.65" y="303.40" font-size="21.0" fill="#000">winter</text>
<text x="1070.02" y="330.30" font-size="21.0" fill="#000">summer</text>
<text x="1075.44" y="384.20" font-size="20.8" font-weight="bold" fill="#000">&lt;&lt;enumeration&gt;&gt;</text>
<text x="1119.67" y="409.10" font-size="20.8" font-weight="bold" fill="#000">ERegras</text>
<text x="1069.43" y="444.10" font-size="21.0" fill="#000">lecturer</text>
<text x="1070.28" y="471.90" font-size="21.0" fill="#000">tutor</text>
<text x="1069.71" y="500.10" font-size="21.0" fill="#000">examiner</text>
<text x="568.80" y="527.40" font-size="20.8" font-weight="bold" fill="#000">Estudante</text>
<text x="548.00" y="561.80" font-size="21.0" fill="#000">+matricula:int</text>
<text x="855.01" y="527.40" font-size="20.8" font-weight="bold" fill="#000">Empregado</text>
<text x="802.30" y="562.90" font-size="21.0" fill="#000">+numAssociacao</text>
<text x="802.30" y="594.00" font-size="21.0" fill="#000">+getnumAssociacao():int</text>
<text x="1016.82" y="665.30" font-size="20.8" font-weight="bold" fill="#000">Suporte</text>
<text x="959.00" y="699.10" font-size="21.0" fill="#000">+regra:Eregras</text>
<text x="959.00" y="727.20" font-size="21.0" fill="#000">+horas:float</text>
<text x="583.50" y="779.00" font-size="20.8" font-weight="bold" fill="#000">CursoExecutado</text>
<text x="555.80" y="814.80" font-size="21.0" fill="#000">+ano:int</text>
<text x="555.80" y="842.20" font-size="21.0" fill="#000">+semestre:ESemestre</text>
<text x="996.44" y="805.70" font-size="20.8" font-weight="bold" fill="#000">Curso</text>
<text x="967.84" y="839.80" font-size="21.0" fill="#000">numCurso:int</text>
<text x="584.70" y="399.90" font-size="18.9" fill="#000">&lt;&lt;abstraction&gt;&gt;</text>
<text x="746.10" y="406.90" font-size="18.9" fill="#000" letter-spacing="0.38">&lt;&lt;abstraction&gt;&gt;</text>
<text x="631.40" y="622.50" font-size="18.9" fill="#000">+estudante</text>
<rect x="533" y="659" width="56" height="21" fill="#fff"/>
<text x="533.07" y="674.20" font-size="18.9" fill="#000">realiza</text>
<text x="552.20" y="746.20" font-size="18.9" fill="#000">+cC</text>
<text x="749.10" y="742.80" font-size="18.9" fill="#000">+cE</text>
<text x="890.10" y="839.80" font-size="18.9" fill="#000">+curso</text>
<path d="M933.7,808.4 V795.4 Q932,798.3 928.8,799.6" fill="none" stroke="#000" stroke-width="1.9"/>
<text x="594.57" y="614.12" font-size="17.6">*</text>
<text x="526.37" y="751.02" font-size="17.6">*</text>
<text x="799.57" y="742.02" font-size="17.6">*</text>
<text x="927.07" y="645.02" font-size="17.6">*</text>
<text x="811.57" y="803.42" font-size="17.6">*</text>
<path d="M893,640.2 H903.2 M898.1,635.1 V645.3" stroke="#000" stroke-width="1.8"/>
</svg>
</body></html>
